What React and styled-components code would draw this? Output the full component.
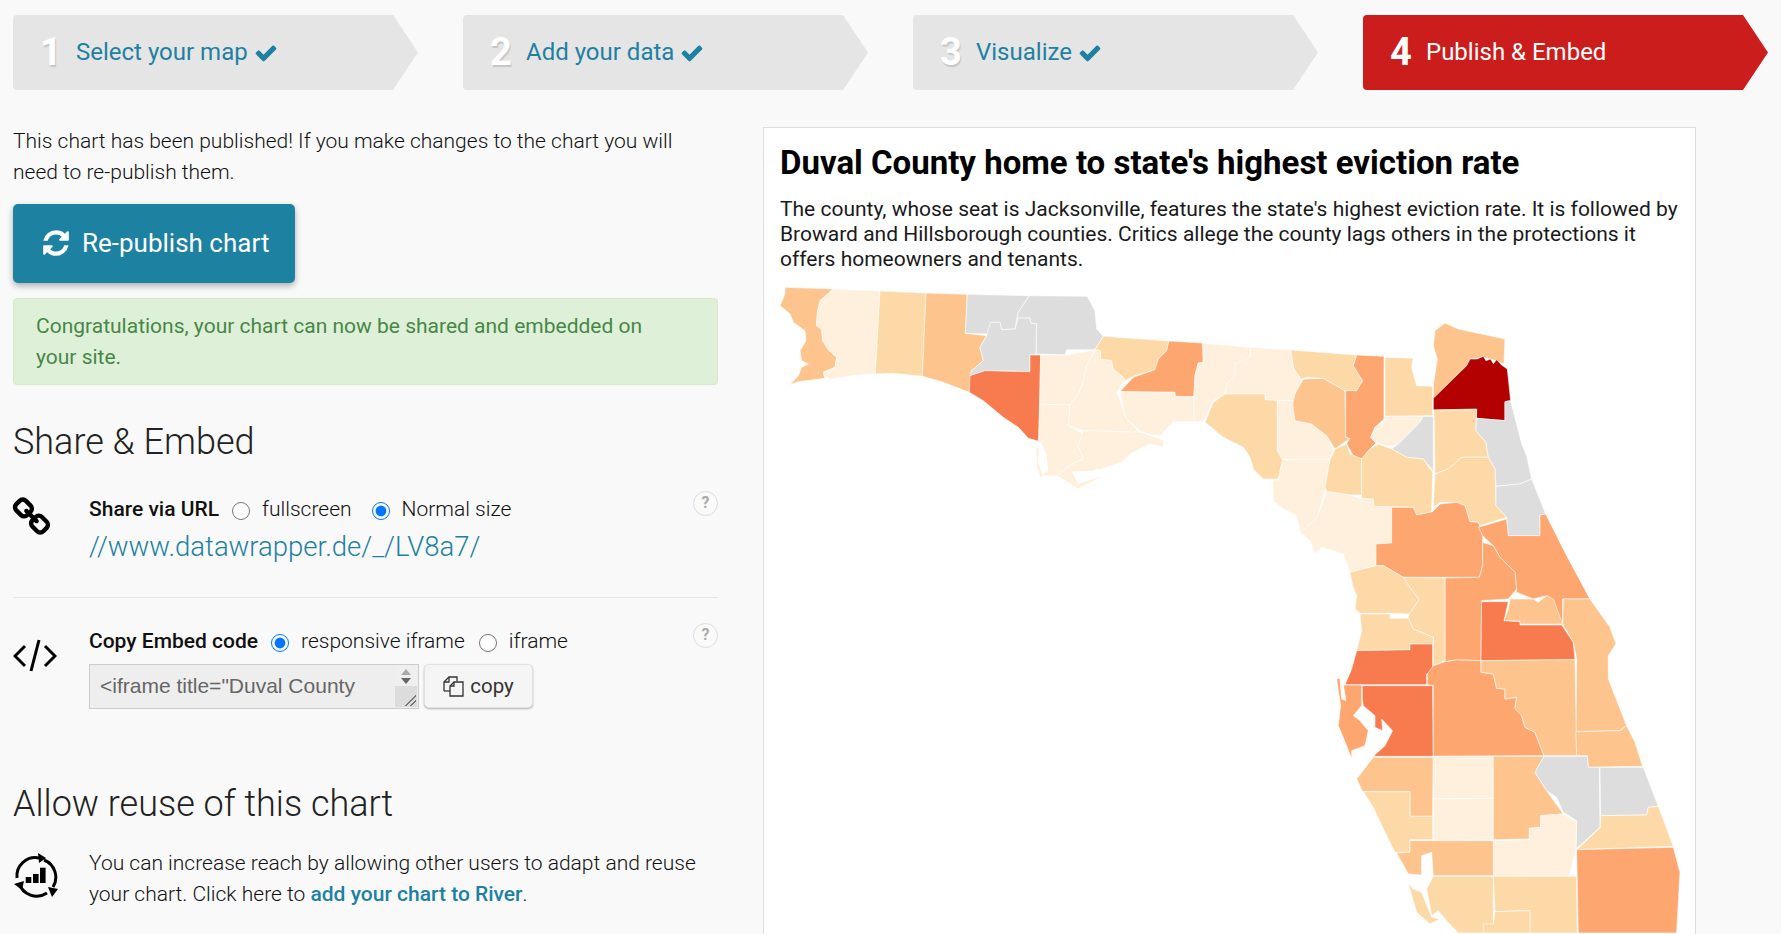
import React from 'react';
import styled, { createGlobalStyle } from 'styled-components';

const BLUE = '#1d81a2';

const GlobalStyle = createGlobalStyle`
  html, body {
    margin: 0;
    padding: 0;
    height: 100%;
    overflow: hidden;
    background: #f9f9f9;
    font-family: Roboto, "Liberation Sans", sans-serif;
    font-size: 21px;
    font-weight: 300;
    line-height: 31px;
    color: #111;
  }
`;

const Page = styled.div`
  height: 934px;
  box-sizing: border-box;
  padding: 15px 0 0 13px;
  overflow: hidden;
`;

const Steps = styled.div`
  display: flex;
  gap: 45px;
`;

const Step = styled.div`
  width: 405px;
  height: 75px;
  display: flex;
  align-items: center;
  padding-left: 27px;
  box-sizing: border-box;
  border-radius: 4px;
  background: ${({ $active }) => ($active ? '#cc1d1d' : '#e5e5e5')};
  color: ${({ $active }) => ($active ? '#fff' : BLUE)};
  clip-path: polygon(0 0, calc(100% - 25px) 0, 100% 50%, calc(100% - 25px) 100%, 0 100%);
`;

const StepNumber = styled.span`
  width: 36px;
  font-size: 38px;
  font-weight: 700;
  color: #fff;
  text-shadow: ${({ $active }) => ($active ? 'none' : '1px 2px 1px rgba(0, 0, 0, 0.14)')};
`;

const StepLabel = styled.span`
  font-size: 24px;
  font-weight: 400;
  display: flex;
  align-items: center;
  gap: 6px;
`;

const Main = styled.div`
  display: flex;
  margin-top: 37px;
`;

const Left = styled.div`
  width: 705px;
  flex: none;
`;

const Para = styled.p`
  margin: -1px 0 0;
`;

const PublishButton = styled.button`
  display: flex;
  align-items: center;
  gap: 11px;
  width: 282px;
  height: 79px;
  margin-top: 16px;
  padding: 0 0 2px 28px;
  border: 0;
  border-radius: 5px;
  background: ${BLUE};
  color: #fff;
  font-family: inherit;
  font-size: 26px;
  font-weight: 400;
  box-shadow: 0 3px 6px rgba(0, 0, 0, 0.3);
`;

const Alert = styled.div`
  margin-top: 15px;
  height: 87px;
  box-sizing: border-box;
  padding: 12px 60px 12px 22px;
  border: 1px solid #d6e9c6;
  border-radius: 4px;
  background: #dff0d8;
  color: #468847;
  font-weight: 400;
`;

const Heading = styled.h2`
  margin: ${({ $top }) => $top}px 0 0;
  font-size: 36px;
  line-height: 50px;
  font-weight: 300;
  color: #222;
`;

const Row = styled.div`
  display: flex;
  margin-top: ${({ $top }) => $top}px;
`;

const IconCol = styled.div`
  width: 76px;
  flex: none;
  padding-top: ${({ $pad }) => $pad}px;
`;

const LinkGlyph = styled.svg`
  display: block;
  margin-left: -2px;
`;

const Body = styled.div`
  flex: 1;
`;

const OptionLine = styled.div`
  display: flex;
  align-items: center;
`;

const OptionTitle = styled.b`
  font-weight: 500;
  color: #111;
`;

const Radio = styled.input.attrs({ type: 'radio' })`
  width: 18px;
  height: 18px;
  margin: 2px 12px 0 ${({ $left }) => $left}px;
  flex: none;
`;

const UrlLink = styled.a`
  display: block;
  margin-top: 2px;
  font-size: 27.5px;
  line-height: 40px;
  color: ${BLUE};
`;

const Help = styled.span`
  width: 25px;
  height: 25px;
  flex: none;
  margin-top: -3px;
  box-sizing: border-box;
  border: 1px solid #ddd;
  border-radius: 50%;
  background: #fafafa;
  color: #aaa;
  font-size: 16px;
  font-weight: 700;
  line-height: 21px;
  text-align: center;
`;

const Divider = styled.hr`
  margin: 30px 0 28px;
  border: 0;
  border-top: 1px solid #e5e5e5;
`;

const EmbedLine = styled.div`
  display: flex;
  gap: 5px;
  margin-top: 7px;
`;

const EmbedBox = styled.div`
  position: relative;
  width: 330px;
  height: 45px;
`;

const EmbedCode = styled.textarea`
  display: block;
  width: 100%;
  height: 100%;
  box-sizing: border-box;
  padding: 5px 30px 0 10px;
  border: 1px solid #ccc;
  border-radius: 0;
  background: #eee;
  color: #666;
  font-family: "Liberation Sans", Arial, sans-serif;
  font-size: 21px;
  line-height: 31px;
  overflow: hidden;
  resize: none;
  outline: none;
`;

// headless chrome hides real scrollbars, so this one sits on top of the textarea
const FakeScrollbar = styled.div`
  position: absolute;
  top: 1px;
  right: 2px;
  bottom: 2px;
  width: 22px;
  display: flex;
  flex-direction: column;
  align-items: center;
  gap: 3px;
  padding-top: 4px;
  box-sizing: border-box;
  background: linear-gradient(#efefef 21px, #dcdcdc 21px);
`;

const ArrowUp = styled.span`
  border: 5px solid transparent;
  border-top: 0;
  border-bottom: 6px solid #aaa;
  border-left-width: 5.5px;
  border-right-width: 5.5px;
`;

const ArrowDown = styled.span`
  border: 5px solid transparent;
  border-bottom: 0;
  border-top: 6px solid #666;
  border-left-width: 5.5px;
  border-right-width: 5.5px;
`;

const ResizeGrip = styled.span`
  position: absolute;
  right: 1px;
  bottom: 1px;
  width: 11px;
  height: 11px;
  background: linear-gradient(135deg, transparent 48%, #777 48%, #777 55%, transparent 55%, transparent 72%, #777 72%, #777 79%, transparent 79%);
`;

const CopyButton = styled.button`
  width: 109px;
  height: 44px;
  display: flex;
  align-items: center;
  justify-content: center;
  gap: 6px;
  border: 1px solid #e2e2e2;
  border-radius: 5px;
  background: #f5f5f5;
  color: #333;
  font-family: inherit;
  font-size: 20.5px;
  font-weight: 400;
  box-shadow: 0 1px 2px rgba(0, 0, 0, 0.3);
`;

const RiverLink = styled.a`
  font-weight: 500;
  color: ${BLUE};
`;

const Chart = styled.div`
  width: 933px;
  height: 900px;
  flex: none;
  margin: 0 0 0 45px;
  box-sizing: border-box;
  padding: 14px 0 0;
  border: 1px solid #ddd;
  background: #fff;
  overflow: hidden;
`;

const ChartTitle = styled.h1`
  margin: 0 0 0 16px;
  font-size: 33px;
  line-height: 41px;
  font-weight: 700;
  color: #000;
`;

const ChartDesc = styled.p`
  margin: 14px 16px 0;
  font-size: 21px;
  line-height: 25px;
  font-weight: 400;
  color: #1a1a1a;
`;

const MapSvg = styled.svg`
  display: block;
  width: 930px;
  height: 660px;
  margin: 7px 0 0 1px;
`;

const C = { p: '#fff0dd', l: '#fed9a8', m: '#fdc48d', o: '#fea66f', r: '#f77b4e', d: '#b30000', g: '#dddddd' };

// panhandle, in 3x coordinates from (770, 280)
const WEST = [
  ['m', '45,25 190,30 150,65 142,100 140,140 155,150 158,185 175,212 200,235 195,265 160,280 165,298 85,308 60,317 85,290 95,265 115,255 95,245 90,215 108,185 105,155 70,130 60,105 30,80 45,45'],
  ['p', '190,30 330,36 316,285 270,287 180,300 162,290 160,280 195,265 200,235 175,212 158,185 155,150 140,140 142,100 150,65'],
  ['l', '330,36 468,42 457,292 370,283 316,285'],
  ['m', '468,42 592,46 586,163 650,170 630,205 640,245 605,275 598,340 520,310 457,292'],
  ['g', '592,46 778,50 745,100 735,150 695,152 690,130 662,130 655,165 586,163'],
  ['g', '778,50 952,52 975,95 980,150 1000,172 975,212 890,212 885,228 798,225 800,135 783,133 780,117 745,117 735,150 745,100'],
  ['g', '662,130 690,130 695,152 735,150 745,117 780,117 783,133 800,135 798,225 780,228 778,278 645,275 605,290 600,290 605,275 640,245 630,205 650,170'],
  ['r', '600,290 645,275 780,278 780,228 812,228 806,487 775,478 745,445 700,415 640,365 598,340'],
  ['p', '812,228 890,228 975,212 950,260 940,310 925,345 900,378 810,376'],
  ['p', '810,376 900,378 895,440 940,465 925,500 940,540 905,555 860,590 820,590 830,530 815,495 806,487'],
  ['p', '975,212 992,215 992,240 1025,245 1030,270 1060,295 1065,305 1040,340 1060,390 1070,420 1110,460 940,455 895,440 900,378 925,345 940,310 950,260'],
  ['p', '940,455 1115,460 1140,470 1180,482 1180,505 1140,495 1080,525 1050,555 1000,590 925,630 895,610 860,590 905,555 940,540 925,500'],
  ['p', '798,505 808,505 805,550 820,590 812,598 800,560'],
  ['l', '1000,172 1197,186 1190,215 1165,240 1155,272 1095,290 1065,305 1060,295 1030,270 1025,245 992,240 992,215 975,212'],
  ['o', '1197,186 1298,192 1300,250 1285,252 1275,290 1272,353 1215,352 1215,340 1050,338 1090,295 1155,272 1165,240 1190,215'],
  ['p', '1050,338 1215,340 1215,352 1272,353 1272,428 1210,428 1170,470 1115,460 1070,420 1060,390'],
  ['p', '1298,192 1442,205 1440,235 1395,260 1395,290 1370,320 1365,345 1330,365 1300,428 1272,428 1272,353 1275,290 1285,252 1300,250'],
];

// bay cut out of the franklin coast
const WEST_WATER = [
  '905,578 970,575 985,568 985,572 1050,550 1060,555 1000,590 925,615',
  '1060,548 1095,535 1095,545 1065,555',
  '808,505 830,530 835,575 820,585 808,550',
];

// north and central, in 3x coordinates from (1200, 280)
const EAST = [
  ['p', '152,205 272,213 282,270 303,300 300,320 280,365 232,365 195,362 195,345 75,345 80,315 105,290 105,255 150,235'],
  ['l', '75,345 195,345 195,362 232,365 232,515 248,542 235,600 190,600 160,570 150,535 130,505 70,475 15,430 40,370'],
  ['p', '232,365 280,365 285,425 335,435 380,470 400,515 390,542 248,542 232,515'],
  ['p', '248,542 390,542 375,635 350,720 300,760 290,710 250,690 220,665 218,605 235,600'],
  ['p', '380,637 450,648 485,660 520,660 522,682 575,682 575,792 528,795 528,860 450,880 430,825 365,805 345,825 330,785 300,760 350,720'],
  ['m', '310,300 370,298 435,335 437,475 450,478 405,510 380,470 335,435 285,425 278,375 285,345'],
  ['l', '272,213 470,228 460,260 488,305 470,335 435,335 370,298 320,295 303,300 282,270'],
  ['o', '470,228 552,232 552,420 525,445 512,475 528,492 510,510 485,540 460,530 440,495 450,478 437,475 437,335 470,335 488,305 460,260'],
  ['l', '555,235 640,238 635,265 650,320 698,322 698,410 555,412'],
  ['p', '555,412 670,412 660,430 625,465 595,495 570,503 525,490 512,475 525,445 552,430'],
  ['g', '670,412 700,412 700,580 695,570 670,540 620,535 575,510 595,495 625,465 660,430'],
  ['m', '735,132 775,150 915,180 912,255 890,245 850,235 810,240 800,260 700,358 700,320 712,240 700,200 705,155'],
  ['d', '810,240 832,240 850,232 858,245 872,240 880,254 890,242 905,258 922,270 932,365 915,368 915,425 830,418 830,390 700,393 700,358 800,260'],
  ['l', '702,393 830,392 828,455 858,490 865,535 785,535 745,570 705,585'],
  ['g', '830,418 915,425 915,368 932,365 965,495 980,530 995,600 960,615 888,622 885,570 865,535 858,490 828,455'],
  ['l', '705,585 745,570 785,535 865,535 885,570 888,680 920,715 835,742 835,730 810,728 795,680 770,670 720,670 700,685'],
  ['g', '888,622 960,615 995,600 1037,705 1020,708 1020,770 925,770 920,715 888,680'],
  ['l', '440,495 450,525 485,540 485,648 450,648 380,637 375,625 385,570 390,542 405,510'],
  ['l', '485,540 510,510 535,495 575,510 620,535 670,540 698,580 695,700 650,708 640,685 522,682 520,660 485,658'],
  ['o', '575,685 640,685 650,708 698,698 720,675 770,670 795,680 810,728 835,730 848,770 848,860 838,895 610,895 550,860 528,860 528,795 575,792'],
  ['o', '835,745 920,720 925,770 1020,770 1020,708 1037,705 1100,830 1170,960 1088,960 1088,1040 1060,1020 1040,950 1000,960 950,940 945,880 900,835 880,800 848,770'],
  ['o', '735,897 838,895 848,860 848,790 880,800 900,835 945,880 950,930 925,960 845,965 843,1145 770,1143 735,1148'],
  ['l', '450,880 528,860 550,860 610,895 630,925 658,962 628,1005 570,1003 480,1003 465,990 470,950 458,920'],
  ['l', '610,895 735,897 735,1145 700,1160 700,1075 640,1050 625,1018 628,1005 658,962 630,925'],
];

// south, in 3x coordinates from (1200, 600)
const SOUTH = [
  ['m', '930,0 1000,0 1015,10 1040,-10 1060,0 1088,75 960,75 960,66 912,65 925,30'],
  ['l', '480,45 570,45 570,58 625,58 640,90 700,115 700,135 630,135 630,152 470,155 485,95'],
  ['r', '845,8 925,8 912,65 960,68 960,78 1085,78 1120,130 1125,182 843,185'],
  ['m', '1090,0 1170,0 1230,85 1248,135 1225,170 1225,240 1280,380 1260,395 1128,398 1130,180 1120,130 1088,75'],
  ['r', '470,155 630,152 630,135 698,135 698,215 680,225 680,257 435,257 455,210'],
  ['o', '410,240 420,238 425,300 438,305 430,258 485,258 485,320 460,350 480,365 505,395 495,440 455,455 455,480 440,440 415,380 422,320'],
  ['r', '487,260 698,260 700,472 520,472 555,440 578,395 545,360 548,395 525,385 525,350 490,320 487,300'],
  ['o', '700,200 735,188 770,183 843,185 843,220 880,225 890,268 915,270 915,300 950,295 945,325 965,350 975,385 1005,400 1032,470 700,472 700,260 682,257 682,225'],
  ['m', '843,185 1125,182 1130,470 1032,470 1005,400 975,385 965,350 945,330 950,295 915,300 915,270 890,268 880,225 843,220'],
  ['m', '1128,398 1260,395 1280,380 1305,430 1328,502 1165,505 1162,470 1130,470'],
  ['m', '520,475 700,475 698,652 630,652 630,578 488,578 470,540'],
  ['p', '700,472 880,472 880,598 700,600'],
  ['p', '700,600 880,598 880,722 700,725'],
  ['m', '880,472 1032,472 1005,520 1040,575 1090,645 1022,650 1022,685 988,688 988,720 880,722'],
  ['g', '1032,472 1162,472 1165,505 1198,505 1200,685 1128,750 1130,665 1090,640 1070,595 1040,575 1005,520'],
  ['g', '1200,505 1330,505 1375,622 1345,625 1340,648 1202,650'],
  ['l', '1202,650 1340,648 1345,625 1375,622 1420,742 1130,752 1202,685'],
  ['l', '490,578 630,578 630,652 698,652 698,722 630,722 630,760 585,760 555,700 520,625'],
  ['p', '880,725 988,722 988,688 1022,685 1022,650 1090,645 1130,668 1128,750 1108,830 925,832 880,832'],
  ['m', '630,725 880,725 880,830 700,830 695,760 665,770 665,828 625,825 590,762 630,760'],
  ['l', '700,832 880,832 880,1002 775,1002 740,965 715,935 695,950 680,870'],
  ['l', '625,855 650,940 690,975 720,960 695,955 665,880 640,870'],
  ['l', '880,832 1130,832 1132,1002 990,1002 990,935 885,938'],
  ['l', '850,975 880,975 885,938 990,935 990,1002 850,1002'],
  ['o', '1130,752 1420,745 1440,820 1430,1002 1135,1002'],
];

const Counties = ({ shapes, x, y }) => (
  <g transform={`translate(${x} ${y}) scale(0.3333)`} stroke="#fff" strokeWidth="1.8" strokeLinejoin="round">
    {shapes.map(([fill, points]) => (
      <polygon key={points} points={points} fill={C[fill]} />
    ))}
  </g>
);

const FloridaMap = () => (
  <MapSvg viewBox="765 280 930 660">
    <Counties shapes={WEST} x={770} y={280} />
    <g transform="translate(770 280) scale(0.3333)" fill="#fff">
      {WEST_WATER.map((points) => (
        <polygon key={points} points={points} />
      ))}
    </g>
    <Counties shapes={EAST} x={1200} y={280} />
    <Counties shapes={SOUTH} x={1200} y={600} />
  </MapSvg>
);

const CheckIcon = () => (
  <svg width="24" height="24" viewBox="0 0 1792 1792" fill="currentColor">
    <path d="M1671 566q0 40-28 68l-724 724-136 136q-28 28-68 28t-68-28l-136-136-362-362q-28-28-28-68t28-68l136-136q28-28 68-28t68 28l294 295 656-657q28-28 68-28t68 28l136 136q28 28 28 68z" />
  </svg>
);

const RefreshIcon = () => (
  <svg width="30" height="30" viewBox="0 0 1792 1792" fill="currentColor">
    <path d="M1639 1056q0 5-1 7-64 268-268 434.5t-478 166.5q-146 0-282.5-55t-243.5-157l-129 129q-19 19-45 19t-45-19-19-45v-448q0-26 19-45t45-19h448q26 0 45 19t19 45-19 45l-137 137q71 66 161 102t187 36q134 0 250-65t186-179q11-17 53-117 8-23 30-23h192q13 0 22.5 9.5t9.5 22.5zm25-800v448q0 26-19 45t-45 19h-448q-26 0-45-19t-19-45 19-45l138-138q-148-137-349-137-134 0-250 65t-186 179q-11 17-53 117-8 23-30 23h-199q-13 0-22.5-9.5t-9.5-22.5v-7q65-268 270-434.5t480-166.5q146 0 284 55.5t245 156.5l130-129q19-19 45-19t45 19 19 45z" />
  </svg>
);

const LinkIcon = () => (
  <LinkGlyph width="41" height="41" viewBox="0 0 1792 1792" fill="#000">
    <path d="M1520 1216q0-40-28-68l-208-208q-28-28-68-28-42 0-72 32 3 3 19 18.500t21.500 21.500 15 19 13 25.500 3.500 27.500q0 40-28 68t-68 28q-15 0-27.500-3.500t-25.500-13-19-15-21.500-21.500-18.500-19q-33 31-33 73 0 40 28 68l206 207q27 27 68 27 40 0 68-26l147-146q28-28 28-67zm-703-705q0-40-28-68l-206-207q-28-28-68-28-39 0-68 27l-147 146q-28 28-28 67 0 40 28 68l208 208q27 27 68 27 42 0 72-31-3-3-19-18.500t-21.500-21.500-15-19-13-25.500-3.500-27.500q0-40 28-68t68-28q15 0 27.500 3.500t25.500 13 19 15 21.500 21.500 18.500 19q33-31 33-73zm895 705q0 120-85 203l-147 146q-83 83-203 83-121 0-204-85l-206-207q-83-83-83-203 0-123 88-209l-88-88q-86 88-208 88-120 0-204-84l-208-208q-84-84-84-204t85-203l147-146q83-83 203-83 121 0 204 85l206 207q83 83 83 203 0 123-88 209l88 88q86-88 208-88 120 0 204 84l208 208q84 84 84 204z" />
  </LinkGlyph>
);

const CodeIcon = () => (
  <svg width="44" height="34" viewBox="0 0 44 34" fill="none" stroke="#000" strokeWidth="3">
    <polyline points="12,7 2,17 12,27" />
    <line x1="26" y1="1" x2="18" y2="32" />
    <polyline points="32,7 42,17 32,27" />
  </svg>
);

const CopyIcon = () => (
  <svg width="21" height="21" viewBox="0 0 21 21" fill="none" stroke="#333" strokeWidth="1.3">
    <path d="M1 15V6l5-5h8v4" />
    <path d="M1 15h6" />
    <path d="M6 1v5H1" />
    <path d="M7 20V10l4-4h9v14z" />
    <path d="M7 10h4V6" />
  </svg>
);

const RiverIcon = () => (
  <svg width="46" height="46" viewBox="0 0 46 46" fill="none" stroke="#000" strokeWidth="3">
    <path d="M4 25A18.5 18.5 0 0 1 26 5" />
    <path d="M31 7A18.5 18.5 0 0 1 40 34" />
    <path d="M34 40A18.5 18.5 0 0 1 6 30" />
    <g fill="#000" stroke="none">
      <path d="M25 0l8 5-7 5z" />
      <path d="M35 34l10 2-6 8z" />
      <path d="M1 31l10-3-2 9z" />
      <rect x="12.7" y="24" width="5.6" height="6" />
      <rect x="20" y="21" width="5.6" height="9" />
      <rect x="27" y="14.7" width="5.6" height="15.3" />
    </g>
  </svg>
);

const STEPS = ['Select your map', 'Add your data', 'Visualize', 'Publish & Embed'];

const EMBED = '<iframe title="Duval County home to state\'s highest eviction rate" aria-label="Map" id="datawrapper-chart-LV8a7" src="//datawrapper.dwcdn.net/LV8a7/1/" scrolling="no" frameborder="0"></iframe>';

export default function App() {
  return (
    <Page>
      <GlobalStyle />
      <Steps>
        {STEPS.map((label, i) => {
          const active = i === 3;
          return (
            <Step key={label} $active={active}>
              <StepNumber $active={active}>{i + 1}</StepNumber>
              <StepLabel>
                {label}
                {!active && <CheckIcon />}
              </StepLabel>
            </Step>
          );
        })}
      </Steps>
      <Main>
        <Left>
          <Para>This chart has been published! If you make changes to the chart you will need to re-publish them.</Para>
          <PublishButton>
            <RefreshIcon />
            Re-publish chart
          </PublishButton>
          <Alert>Congratulations, your chart can now be shared and embedded on your site.</Alert>
          <Heading $top={32}>Share &amp; Embed</Heading>
          <Row $top={27}>
            <IconCol $pad={3}>
              <LinkIcon />
            </IconCol>
            <Body>
              <OptionLine>
                <OptionTitle>Share via URL</OptionTitle>
                <Radio name="share" $left={13} />
                fullscreen
                <Radio name="share" $left={20} defaultChecked />
                Normal size
              </OptionLine>
              <UrlLink>//www.datawrapper.de/_/LV8a7/</UrlLink>
            </Body>
            <Help>?</Help>
          </Row>
          <Divider />
          <Row $top={0}>
            <IconCol $pad={13}>
              <CodeIcon />
            </IconCol>
            <Body>
              <OptionLine>
                <OptionTitle>Copy Embed code</OptionTitle>
                <Radio name="embed" $left={13} defaultChecked />
                responsive iframe
                <Radio name="embed" $left={14} />
                iframe
              </OptionLine>
              <EmbedLine>
                <EmbedBox>
                  <EmbedCode readOnly value={EMBED} />
                  <FakeScrollbar>
                    <ArrowUp />
                    <ArrowDown />
                    <ResizeGrip />
                  </FakeScrollbar>
                </EmbedBox>
                <CopyButton>
                  <CopyIcon />
                  copy
                </CopyButton>
              </EmbedLine>
            </Body>
            <Help>?</Help>
          </Row>
          <Heading $top={70}>Allow reuse of this chart</Heading>
          <Row $top={19}>
            <IconCol $pad={5}>
              <RiverIcon />
            </IconCol>
            <Body>
              You can increase reach by allowing other users to adapt and reuse your chart. Click here to <RiverLink>add your chart to River</RiverLink>.
            </Body>
          </Row>
        </Left>
        <Chart>
          <ChartTitle>Duval County home to state's highest eviction rate</ChartTitle>
          <ChartDesc>The county, whose seat is Jacksonville, features the state's highest eviction rate. It is followed by Broward and Hillsborough counties. Critics allege the county lags others in the protections it offers homeowners and tenants.</ChartDesc>
          <FloridaMap />
        </Chart>
      </Main>
    </Page>
  );
}
